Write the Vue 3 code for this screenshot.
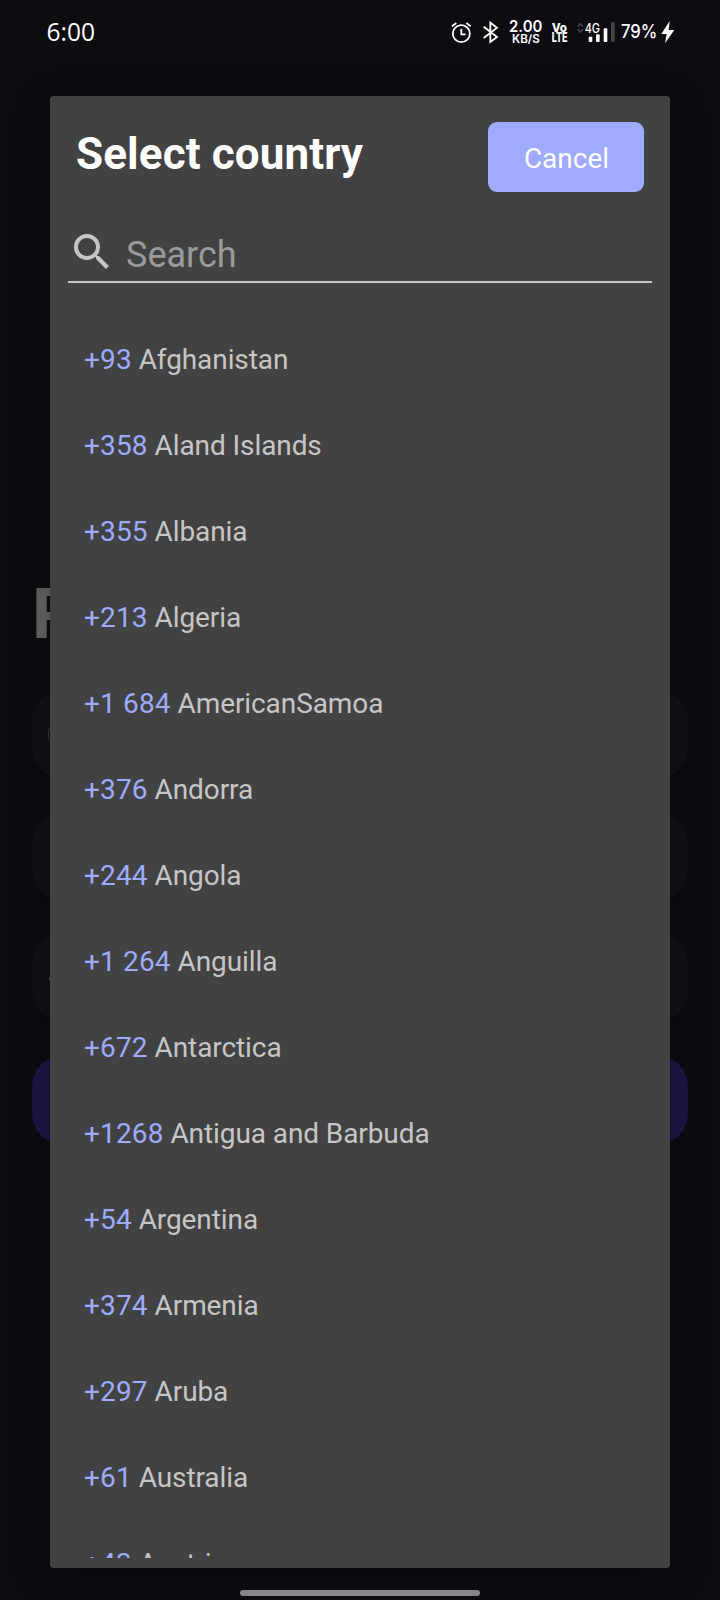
<script setup>
const countries = [
  ['+93', 'Afghanistan'],
  ['+358', 'Aland Islands'],
  ['+355', 'Albania'],
  ['+213', 'Algeria'],
  ['+1 684', 'AmericanSamoa'],
  ['+376', 'Andorra'],
  ['+244', 'Angola'],
  ['+1 264', 'Anguilla'],
  ['+672', 'Antarctica'],
  ['+1268', 'Antigua and Barbuda'],
  ['+54', 'Argentina'],
  ['+374', 'Armenia'],
  ['+297', 'Aruba'],
  ['+61', 'Australia'],
  ['+43', 'Austria'],
]
</script>

<template>
  <div class="screen">
    <header class="status">
      <svg class="clock" width="60" height="45" viewBox="0 0 60 45">
        <text x="0.5" y="30.5" textLength="48.5" lengthAdjust="spacingAndGlyphs">6:00</text>
      </svg>
      <svg class="indicators" width="240" height="45" viewBox="0 0 720 135">
        <g fill="none" stroke="#fff" stroke-width="5.5">
          <circle cx="64" cy="71" r="25.5" />
          <path d="M64 56V73H77" />
          <path d="M36 49L49 39M79 39L92 49" />
          <path d="M131 50L171 81L151 96V38L171 53L131 84" />
        </g>
        <g fill="#fff" class="bold">
          <text x="207" y="66" font-size="46" textLength="100" lengthAdjust="spacingAndGlyphs">2.00</text>
          <text x="216" y="99" font-size="34" textLength="83" lengthAdjust="spacingAndGlyphs">KB/S</text>
          <text x="335" y="65" font-size="37" class="heavy" textLength="46" lengthAdjust="spacingAndGlyphs">Vo</text>
          <text x="335" y="96" font-size="38" class="heavy" textLength="48" lengthAdjust="spacingAndGlyphs">LTE</text>
          <text x="434" y="68" font-size="38" class="medium" textLength="46" lengthAdjust="spacingAndGlyphs">4G</text>
          <text x="543" y="84" font-size="55" class="medium" textLength="109" lengthAdjust="spacingAndGlyphs">79%</text>
        </g>
        <g fill="none" stroke="#444348" stroke-width="5">
          <path d="M413 50L421 41L429 50M413 57L421 66L429 57" />
        </g>
        <g fill="#fff">
          <rect x="446" y="80" width="11" height="16" rx="3" />
          <rect x="468" y="73" width="11" height="23" rx="3" />
          <rect x="491" y="55" width="11" height="41" rx="3" />
          <rect x="513" y="36" width="11" height="60" rx="3" fill="#444348" />
          <path d="M689 33L664 72H680L675 100L703 60H686Z" />
        </g>
      </svg>
    </header>

    <main class="form">
      <h1>P</h1>
      <div class="field"><span class="ring"></span></div>
      <div class="field"></div>
      <div class="field"><span class="dot"></span></div>
      <div class="field submit"></div>
    </main>

    <section class="dialog">
      <div class="head">
        <h2>Select country</h2>
        <button type="button">Cancel</button>
      </div>
      <div class="search">
        <svg width="48" height="48" viewBox="0 0 24 24">
          <path fill="#c6c6c6" d="M15.5 14h-.79l-.28-.27A6.471 6.471 0 0 0 16 9.5 6.5 6.5 0 1 0 9.5 16c1.61 0 3.09-.59 4.23-1.57l.27.28v.79l5 4.99L20.49 19l-4.99-5zm-6 0C7.01 14 5 11.99 5 9.5S7.01 5 9.5 5 14 7.01 14 9.5 11.99 14 9.5 14z" />
        </svg>
        <span>Search</span>
      </div>
      <ul class="list">
        <li v-for="[code, name] in countries" :key="name">
          <span class="code">{{ code }}</span> {{ name }}
        </li>
      </ul>
    </section>
    <div class="home"></div>
  </div>
</template>

<style>
body { background: #0c0b10; }
</style>

<style scoped>
.screen {
  position: relative;
  width: 720px;
  height: 1600px;
  overflow: hidden;
  background: #0d0c11;
  font-family: Roboto, "Noto Sans", sans-serif;
}
.status {
  display: flex;
  justify-content: space-between;
  padding: 10px 40px 0 46px;
  height: 45px;
}
.clock { font: 400 25px "Open Sans", sans-serif; fill: #fff; }
.bold { font-family: Inter, sans-serif; font-weight: 600; }
.medium { font-weight: 500; }
.heavy { font-weight: 800; }
.form {
  display: flex;
  flex-direction: column;
  gap: 32px;
  padding: 516px 32px 0;
}
h1 {
  margin: 0;
  height: 86px;
  line-height: 86px;
  font-size: 70px;
  font-weight: 700;
  color: #666;
}
.field {
  display: flex;
  align-items: center;
  height: 90px;
  padding-left: 16px;
  box-sizing: border-box;
  border-radius: 32px;
  background: #121116;
  box-shadow: 0 2px 4px rgba(0, 0, 0, 0.25);
}
.submit { background: #1f1547; box-shadow: none; }
.ring { width: 14px; height: 18px; border-radius: 9px; border: 1px solid #40393a; }
.dot { width: 5px; height: 3px; margin-left: 1px; border-radius: 2px; background: #77767c; }
.dialog {
  position: absolute;
  left: 50px;
  top: 96px;
  width: 620px;
  height: 1472px;
  box-sizing: border-box;
  padding: 26px 18px 10px;
  display: flex;
  flex-direction: column;
  border-radius: 4px;
  background: #424242;
  box-shadow: 0 10px 40px rgba(0, 0, 0, 0.3);
}
.head {
  display: flex;
  justify-content: space-between;
  height: 70px;
  padding: 0 8px;
}
h2 {
  margin: 0;
  line-height: 64px;
  font-size: 44px;
  font-weight: 700;
  letter-spacing: 0.1px;
  color: #fff;
}
button {
  width: 156px;
  height: 70px;
  padding: 3px 0 0 1px;
  border: 0;
  border-radius: 9px;
  background: #9eabff;
  color: #fff;
  font: 400 28px Roboto, sans-serif;
}
.search {
  display: flex;
  margin-top: 36px;
  height: 53px;
  border-bottom: 2px solid #c6c6c6;
}
.search span {
  margin-left: 10px;
  line-height: 55px;
  font-size: 36px;
  color: #9b9b9b;
}
.list {
  flex: 1;
  min-height: 0;
  overflow: hidden;
  margin: 34px 0 0;
  padding: 0 0 0 16px;
  list-style: none;
}
li {
  height: 86px;
  line-height: 86px;
  font-size: 28px;
  letter-spacing: -0.09px;
  color: #c6c6c6;
  white-space: nowrap;
}
.code { color: #9eabff; letter-spacing: 0.15px; }
.home {
  position: absolute;
  left: 240px;
  top: 1590px;
  width: 240px;
  height: 6px;
  border-radius: 3px;
  background: #868589;
}
</style>
